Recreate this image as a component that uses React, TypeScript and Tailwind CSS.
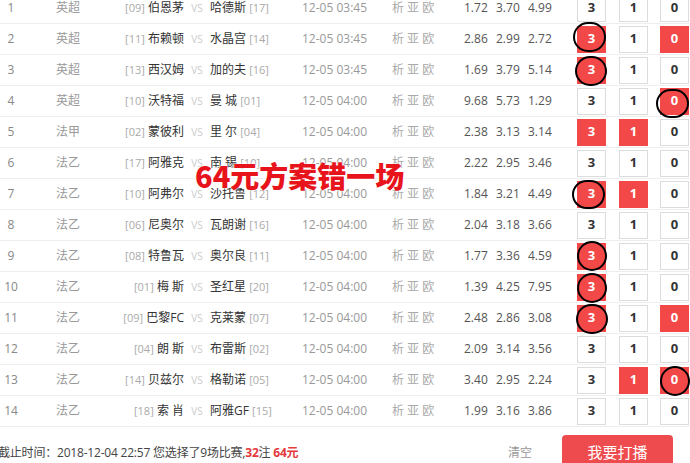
import React from "react";

type Row = {
  i: number;
  lg: string;
  hr: string;
  h: string;
  a: string;
  ar: string;
  t: string;
  o: [string, string, string];
  sel: [boolean, boolean, boolean];
  circ?: { idx: number; cls: string };
};

const rows: Row[] = [
  { i: 1, lg: "英超", hr: "[09]", h: "伯恩茅", a: "哈德斯", ar: "[17]", t: "12-05 03:45", o: ["1.72", "3.70", "4.99"], sel: [false, false, false] },
  { i: 2, lg: "英超", hr: "[11]", h: "布赖顿", a: "水晶宫", ar: "[14]", t: "12-05 03:45", o: ["2.86", "2.99", "2.72"], sel: [true, false, true], circ: { idx: 0, cls: "-left-[4px] -top-[4px] w-[33px] h-[30px]" } },
  { i: 3, lg: "英超", hr: "[13]", h: "西汉姆", a: "加的夫", ar: "[16]", t: "12-05 03:45", o: ["1.69", "3.79", "5.14"], sel: [true, false, false], circ: { idx: 0, cls: "-left-[2px] -top-[1px] w-[32px] h-[30px]" } },
  { i: 4, lg: "英超", hr: "[10]", h: "沃特福", a: "曼 城", ar: "[01]", t: "12-05 04:00", o: ["9.68", "5.73", "1.29"], sel: [false, false, true], circ: { idx: 2, cls: "-left-[4px] top-[1px] w-[33px] h-[29px]" } },
  { i: 5, lg: "法甲", hr: "[02]", h: "蒙彼利", a: "里 尔", ar: "[04]", t: "12-05 04:00", o: ["2.38", "3.13", "3.14"], sel: [true, true, false] },
  { i: 6, lg: "法乙", hr: "[17]", h: "阿雅克", a: "南 锡", ar: "[10]", t: "12-05 04:00", o: ["2.22", "2.95", "3.46"], sel: [false, false, false] },
  { i: 7, lg: "法乙", hr: "[10]", h: "阿弗尔", a: "沙托鲁", ar: "[12]", t: "12-05 04:00", o: ["1.84", "3.21", "4.49"], sel: [true, true, false], circ: { idx: 0, cls: "-left-[5px] -top-[1px] w-[33px] h-[29px]" } },
  { i: 8, lg: "法乙", hr: "[06]", h: "尼奥尔", a: "瓦朗谢", ar: "[16]", t: "12-05 04:00", o: ["2.04", "3.18", "3.66"], sel: [false, false, false] },
  { i: 9, lg: "法乙", hr: "[08]", h: "特鲁瓦", a: "奥尔良", ar: "[11]", t: "12-05 04:00", o: ["1.77", "3.36", "4.59"], sel: [true, false, false], circ: { idx: 0, cls: "left-[0px] -top-[2px] w-[30px] h-[30px]" } },
  { i: 10, lg: "法乙", hr: "[01]", h: "梅 斯", a: "圣红星", ar: "[20]", t: "12-05 04:00", o: ["1.39", "4.25", "7.95"], sel: [true, false, false], circ: { idx: 0, cls: "left-[0px] -top-[1px] w-[30px] h-[30px]" } },
  { i: 11, lg: "法乙", hr: "[09]", h: "巴黎FC", a: "克莱蒙", ar: "[07]", t: "12-05 04:00", o: ["2.48", "2.86", "3.08"], sel: [true, false, true], circ: { idx: 0, cls: "-left-[1px] -top-[1px] w-[32px] h-[30px]" } },
  { i: 12, lg: "法乙", hr: "[04]", h: "朗 斯", a: "布雷斯", ar: "[02]", t: "12-05 04:00", o: ["2.09", "3.14", "3.56"], sel: [false, false, false] },
  { i: 13, lg: "法乙", hr: "[14]", h: "贝兹尔", a: "格勒诺", ar: "[05]", t: "12-05 04:00", o: ["3.40", "2.95", "2.24"], sel: [false, true, true], circ: { idx: 2, cls: "left-[0px] -top-[1px] w-[30px] h-[30px]" } },
  { i: 14, lg: "法乙", hr: "[18]", h: "索 肖", a: "阿雅GF", ar: "[15]", t: "12-05 04:00", o: ["1.99", "3.16", "3.86"], sel: [false, false, false] },
];

const labels = ["3", "1", "0"];
const boxMargins = ["ml-[17px]", "ml-[13px]", "ml-[12px]"];

function Box({ label, sel, circle, mcls }: { label: string; sel: boolean; circle?: string; mcls: string }) {
  return (
    <div
      className={
        "relative flex h-[27px] w-[29px] shrink-0 items-center justify-center text-[13px] font-bold " +
        mcls +
        " " +
        (sel ? "bg-[#f24848] text-white" : "border border-[#dcdcdc] bg-white text-[#333]")
      }
    >
      {label}
      {circle ? (
        <div className={"pointer-events-none absolute rounded-full border-[2.5px] border-black " + circle} />
      ) : null}
    </div>
  );
}

export default function App() {
  return (
    <div
      className="relative h-[463px] w-[690px] overflow-hidden bg-white text-[12px]"
      style={{ fontFamily: '"Open Sans", "Noto Sans CJK SC", sans-serif' }}
    >
      <div className="-mt-[7px]">
        {rows.map((r) => (
          <div key={r.i} className="flex h-[31px] items-center border-b border-[#eeeeee]">
            <div className="w-[22px] shrink-0 text-center text-[#888]">{r.i}</div>
            <div className="w-[92px] shrink-0 text-center text-[#999]">{r.lg}</div>
            <div className="w-[70px] shrink-0 whitespace-nowrap text-right text-[#333]">
              <span className="text-[11px] text-[#aaa]">{r.hr}</span> {r.h}
            </div>
            <div className="w-[26px] shrink-0 text-center text-[10px] text-[#ccc]">VS</div>
            <div className="w-[92px] shrink-0 whitespace-nowrap text-[#333]">
              {r.a} <span className="text-[11px] text-[#aaa]">{r.ar}</span>
            </div>
            <div className="w-[90px] shrink-0 whitespace-nowrap text-[#999]">{r.t}</div>
            <div className="w-[72px] shrink-0 whitespace-nowrap text-[#aaa]">析 亚 欧</div>
            <div className="w-[32px] shrink-0 text-[#555]">{r.o[0]}</div>
            <div className="w-[32px] shrink-0 text-[#555]">{r.o[1]}</div>
            <div className="w-[32px] shrink-0 text-[#555]">{r.o[2]}</div>
            {labels.map((l, k) => (
              <Box
                key={l}
                label={l}
                sel={r.sel[k]}
                mcls={boxMargins[k]}
                circle={r.circ && r.circ.idx === k ? r.circ.cls : undefined}
              />
            ))}
          </div>
        ))}
      </div>

      <div className="flex items-start pt-[8px]">
        <div className="-ml-[2px] mt-[9px] flex-1 whitespace-nowrap text-[12px] tracking-[-0.2px] text-[#444]">
          截止时间：2018-12-04 22:57 您选择了9场比赛,<span className="font-bold text-[#e4393c]">32</span>注{" "}
          <span className="font-bold text-[#e4393c]">64元</span>
        </div>
        <div className="mr-[30px] mt-[9px] text-[12px] text-[#999]">清空</div>
        <div className="mr-[17px] flex h-[34px] w-[111px] items-center justify-center rounded-[4px] bg-[#ee4b4e] text-[15px] text-white">
          我要打播
        </div>
      </div>

      <div
        className="absolute left-[195px] top-[161px] whitespace-nowrap text-[29px] font-black leading-none text-[#e8141c] [text-shadow:0_0_2px_#fff,0_0_2px_#fff]"
        style={{ fontFamily: '"Noto Sans CJK SC", sans-serif' }}
      >
        64元方案错一场
      </div>
    </div>
  );
}
